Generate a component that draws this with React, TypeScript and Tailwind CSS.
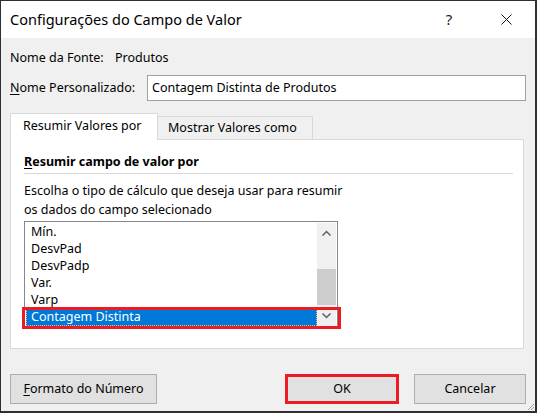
import React from "react";

const font = { fontFamily: '"Noto Sans", "Segoe UI", Arial, sans-serif' };

function Chevron({ up }: { up?: boolean }) {
  return (
    <svg width="9" height="6" viewBox="0 0 9 6" className="block">
      <path
        d={up ? "M0.5 5.5 L4.5 1.5 L8.5 5.5" : "M0.5 0.5 L4.5 4.5 L8.5 0.5"}
        fill="none"
        stroke="#606060"
        strokeWidth="1.5"
      />
    </svg>
  );
}

export default function App() {
  const items = ["Mín.", "DesvPad", "DesvPadp", "Var.", "Varp"];
  return (
    <div
      className="w-[537px] h-[413px] flex flex-col border-l border-t border-r-2 border-b-2 border-[#2f2f2f] bg-[#f0f0f0] text-[12.5px] text-black relative overflow-hidden"
      style={font}
    >
      {/* Title bar */}
      <div className="h-[37px] bg-white flex items-center pl-[9px] shrink-0">
        <div className="text-[14.5px] flex-1 leading-none">Configurações do Campo de Valor</div>
        <div className="w-[30px] text-[15px] text-center leading-none mr-[27px] text-[#222]">?</div>
        <div className="w-[30px] flex justify-center mr-[14px]">
          <svg width="11" height="11" viewBox="0 0 11 11">
            <path d="M0.5 0.5 L10.5 10.5 M10.5 0.5 L0.5 10.5" stroke="#111" strokeWidth="1" />
          </svg>
        </div>
      </div>

      {/* Body */}
      <div className="flex-1 flex flex-col pl-[9px] pr-[9px]">
        <div className="mt-[12px] h-[16px] flex items-center leading-none">
          <span className="w-[105px]">Nome da Fonte:</span>
          <span>Produtos</span>
        </div>
        <div className="mt-[9px] h-[26px] flex items-center">
          <span className="w-[137px] leading-none">
            <span className="underline underline-offset-2">N</span>ome Personalizado:
          </span>
          <div className="flex-1 h-[26px] bg-white border border-[#a0a0a0] flex items-center pl-[4px] leading-none">
            Contagem Distinta de Produtos
          </div>
        </div>

        {/* Tabs */}
        <div className="mt-[12px] flex items-end h-[27px] relative z-10">
          <div className="w-[148px] h-[27px] bg-white border border-b-0 border-[#d9d9d9] flex items-center pl-[12px] leading-none pb-[1px]">
            Resumir Valores por
          </div>
          <div className="w-[155px] h-[24px] bg-[#f0f0f0] border border-l-0 border-[#d9d9d9] flex items-center pl-[10px] leading-none">
            Mostrar Valores como
          </div>
        </div>

        {/* Panel */}
        <div className="mr-[2px] -mt-[1px] h-[210px] bg-white border border-[#d9d9d9] flex flex-col pl-[13px] pr-[10px]">
          <div className="mt-[14px] h-[16px] flex items-center font-bold leading-none">
            <span className="underline underline-offset-2">R</span>esumir campo de valor por
          </div>
          <div className="mt-[3px] h-px bg-[#d9d9d9]" />
          <div className="mt-[7px] leading-[19px]">
            <div>Escolha o tipo de cálculo que deseja usar para resumir</div>
            <div>os dados do campo selecionado</div>
          </div>
          {/* Listbox */}
          <div className="mt-[2px] w-[314px] h-[107px] border border-[#828790] flex relative">
            <div className="flex-1 flex flex-col pt-[2px] pl-[1px]">
              {items.map((t) => (
                <div key={t} className="h-[17px] flex items-center pl-[5px] leading-none">
                  {t}
                </div>
              ))}
              <div className="h-[17px] flex items-center pl-[4px] leading-none bg-[#0078d7] text-white border border-dotted border-[#f4b97c]">
                Contagem Distinta
              </div>
            </div>
            <div className="w-[19px] mr-[1px] my-[1px] bg-[#f0f0f0] flex flex-col">
              <div className="h-[20px] flex items-center justify-center">
                <Chevron up />
              </div>
              <div className="h-[26px]" />
              <div className="h-[36px] bg-[#cdcdcd]" />
              <div className="flex-1 flex items-center justify-center">
                <Chevron />
              </div>
            </div>
            <div className="absolute left-[-3px] right-[-4px] bottom-[-2px] h-[22px] border-[3px] border-[#ed1c24]" />
          </div>
        </div>

        {/* Buttons */}
        <div className="mt-[25px] flex items-center">
          <div className="w-[147px] h-[30px] bg-[#e1e1e1] border border-[#adadad] flex items-center justify-center leading-none">
            <span>
              <span className="underline underline-offset-2">F</span>ormato do Número
            </span>
          </div>
          <div className="flex-1" />
          <div className="w-[114px] h-[30px] bg-[#e1e1e1] border-[3px] border-[#ed1c24] flex items-center justify-center leading-none">
            OK
          </div>
          <div className="w-[112px] ml-[15px] h-[30px] bg-[#e1e1e1] border border-[#adadad] flex items-center justify-center leading-none">
            Cancelar
          </div>
        </div>
      </div>

      {/* Resize grip */}
      <svg className="absolute right-0 bottom-0" width="8" height="8" viewBox="0 0 8 8">
        <path d="M7 1 L1 7 M7 4 L4 7 M7 7 L7 7" stroke="#a0a0a0" strokeWidth="1" />
      </svg>
    </div>
  );
}
